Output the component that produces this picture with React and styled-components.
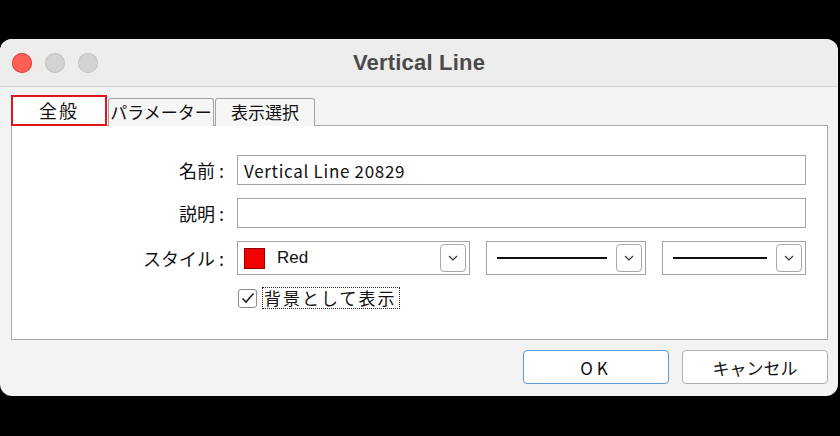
import React from 'react';
import styled, { createGlobalStyle } from 'styled-components';

const GlobalStyle = createGlobalStyle`
	html, body {
		margin: 0;
		padding: 0;
		background: #000;
	}
	body {
		font-family: "Noto Sans CJK JP", "Noto Sans", sans-serif;
		color: #111;
	}
`;

export default function App() {
	return (
		<>
			<GlobalStyle />
			<Window>
				<TitleBar>
					<Lights>
						<Light $color="#fe5f57" $border="#e2463f" />
						<Light $color="#d3d3d3" $border="#c4c4c4" />
						<Light $color="#d3d3d3" $border="#c4c4c4" />
					</Lights>
					<Title>Vertical Line</Title>
					<span />
				</TitleBar>
				<Body>
					<TabStrip>
						<Tab $active $width={96}>全般</Tab>
						<Tab $width={106}>パラメーター</Tab>
						<Tab $width={100}>表示選択</Tab>
					</TabStrip>
					<Panel>
						<Form>
							<Label>名前 :</Label>
							<TextInput>Vertical Line 20829</TextInput>
							<Label>説明 :</Label>
							<TextInput />
							<Label>スタイル :</Label>
							<StyleRow>
								<Combo $width={233}>
									<Swatch />
									<ComboText>Red</ComboText>
									<DropButton>
										<Chevron />
									</DropButton>
								</Combo>
								<Combo $width={160}>
									<LineSample />
									<DropButton>
										<Chevron />
									</DropButton>
								</Combo>
								<Combo>
									<LineSample />
									<DropButton>
										<Chevron />
									</DropButton>
								</Combo>
							</StyleRow>
							<CheckRow>
								<CheckBox>
									<svg width="14" height="12" viewBox="0 0 14 12">
										<path d="M1.5 6.5 L5 10 L12.5 1.5" fill="none" stroke="#222" strokeWidth="1.6" />
									</svg>
								</CheckBox>
								<CheckLabel>背景として表示</CheckLabel>
							</CheckRow>
						</Form>
					</Panel>
					<Footer>
						<Button $primary>OK</Button>
						<Button>キャンセル</Button>
					</Footer>
				</Body>
			</Window>
		</>
	);
}

function Chevron() {
	return (
		<svg width="10" height="6" viewBox="0 0 10 6">
			<path d="M1 1 L5 5 L9 1" fill="none" stroke="#333" strokeWidth="1.2" />
		</svg>
	);
}

const Window = styled.div`
	width: 838px;
	height: 357px;
	margin-top: 39px;
	border-radius: 12px;
	background: #f3f3f3;
	overflow: hidden;
	display: flex;
	flex-direction: column;
`;

const TitleBar = styled.div`
	height: 47px;
	background: #ededeb;
	border-bottom: 1px solid #d5d5d5;
	display: grid;
	grid-template-columns: 1fr auto 1fr;
	align-items: center;
`;

const Lights = styled.div`
	display: flex;
	gap: 13px;
	padding-left: 12px;
	padding-top: 1px;
`;

const Light = styled.span`
	width: 20px;
	height: 20px;
	border-radius: 50%;
	background: ${(p) => p.$color};
	box-shadow: inset 0 0 0 1px ${(p) => p.$border};
`;

const Title = styled.div`
	font-family: "Liberation Sans", Arial, sans-serif;
	font-weight: 700;
	font-size: 22px;
	color: #4a4a4a;
	letter-spacing: 0.2px;
`;

const Body = styled.div`
	flex: 1;
	display: flex;
	flex-direction: column;
	padding: 8px 10px 0 11px;
`;

const TabStrip = styled.div`
	display: flex;
	align-items: flex-end;
	gap: 1px;
	height: 31px;
	position: relative;
	z-index: 1;
	margin-bottom: -1px;
`;

const Tab = styled.div`
	box-sizing: border-box;
	width: ${(p) => p.$width}px;
	height: ${(p) => (p.$active ? 31 : 28)}px;
	display: flex;
	align-items: center;
	justify-content: center;
	font-size: ${(p) => (p.$active ? 18 : 17)}px;
	background: ${(p) => (p.$active ? '#fff' : '#f6f6f6')};
	border: ${(p) => (p.$active ? '2px solid #e0161c' : '1px solid #a4a4a4')};
	border-bottom: ${(p) => (p.$active ? '2px solid #e0161c' : 'none')};
	border-radius: ${(p) => (p.$active ? '0' : '3px 3px 0 0')};
	padding-bottom: 2px;
	letter-spacing: ${(p) => (p.$active ? '2px' : '0')};
`;

const Panel = styled.div`
	box-sizing: border-box;
	height: 215px;
	background: #fff;
	border: 1px solid #a9a9a9;
`;

const Form = styled.div`
	display: grid;
	grid-template-columns: 212px 1fr;
	grid-template-rows: 30px 30px 34px 20px;
	column-gap: 13px;
	row-gap: 13px;
	padding: 29px 21px 0 0;
`;

const Label = styled.div`
	font-size: 18px;
	text-align: right;
	align-self: center;
	white-space: pre;
`;

const TextInput = styled.div`
	box-sizing: border-box;
	height: 30px;
	border: 1px solid #a3a3a3;
	padding: 0 6px;
	display: flex;
	align-items: center;
	font-size: 17px;
	letter-spacing: 0.7px;
`;

const StyleRow = styled.div`
	display: flex;
	gap: 16px;
`;

const Combo = styled.div`
	box-sizing: border-box;
	height: 34px;
	${(p) => (p.$width ? `width: ${p.$width}px;` : 'flex: 1;')}
	border: 1px solid #a3a3a3;
	background: #fff;
	display: flex;
	align-items: center;
	padding: 0 3px 0 6px;
`;

const Swatch = styled.span`
	box-sizing: border-box;
	width: 21px;
	height: 21px;
	background: #f50000;
	border: 1px solid #8a0000;
	margin-right: 12px;
`;

const ComboText = styled.span`
	font-family: "Liberation Sans", Arial, sans-serif;
	font-size: 17px;
`;

const LineSample = styled.span`
	flex: 1;
	height: 2px;
	background: #111;
	margin: 0 9px 0 4px;
`;

const DropButton = styled.span`
	box-sizing: border-box;
	width: 26px;
	height: 28px;
	margin-left: auto;
	border: 1px solid #a8a8a8;
	border-radius: 4px;
	display: flex;
	align-items: center;
	justify-content: center;
	background: #fff;
`;

const CheckRow = styled.div`
	grid-column: 2;
	display: flex;
	align-items: center;
	gap: 5px;
	padding-left: 1px;
`;

const CheckBox = styled.span`
	box-sizing: border-box;
	width: 19px;
	height: 19px;
	border: 1px solid #8c8c8c;
	border-radius: 3px;
	display: flex;
	align-items: center;
	justify-content: center;
`;

const CheckLabel = styled.span`
	font-size: 17px;
	line-height: 20px;
	border: 1px dotted #222;
	padding: 0 2px 0 1px;
	letter-spacing: 2px;
`;

const Footer = styled.div`
	display: flex;
	justify-content: flex-end;
	gap: 13px;
	padding-top: 10px;
`;

const Button = styled.div`
	box-sizing: border-box;
	width: 146px;
	height: 34px;
	border-radius: 4px;
	background: #fff;
	border: 1px solid ${(p) => (p.$primary ? '#5c9ad8' : '#b0b0b0')};
	display: flex;
	align-items: center;
	justify-content: center;
	font-size: 17px;
	letter-spacing: ${(p) => (p.$primary ? '4px' : '0')};
`;
